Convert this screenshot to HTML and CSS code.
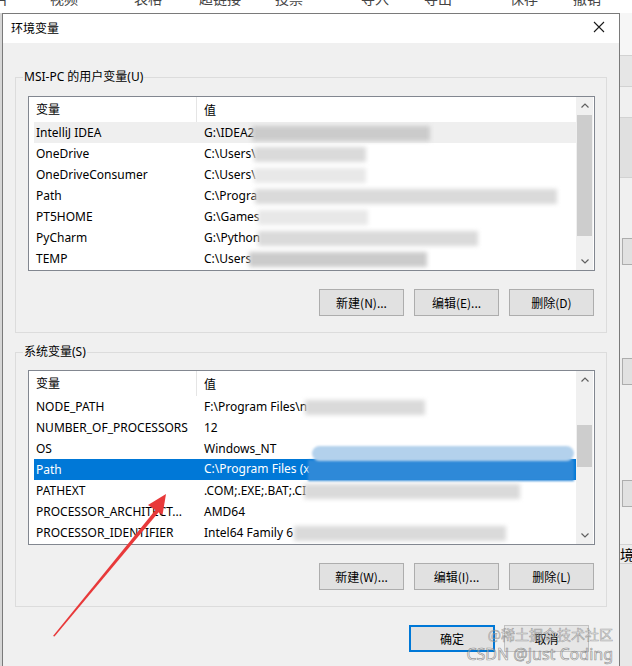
FILE: index.html
```html
<!DOCTYPE html>
<html lang="zh-CN">
<head>
  <meta charset="UTF-8" />
  <title>环境变量</title>
  <link rel="stylesheet" href="styles.css">
</head>
<body>

  <!-- 后面那个编辑器的工具栏，只露出一点 -->
  <div class="appbar">
    <span>片</span><span>视频</span><span>表格</span><span>超链接</span><span>投票</span>
    <span>导入</span><span>导出</span><span>保存</span><span>撤销</span><span>三</span>
  </div>

  <div class="stage">
    <div class="edge-left"></div>

    <div class="dialog">
      <div class="titlebar">
        <span class="title">环境变量</span>
        <svg class="close" width="12" height="12" viewBox="0 0 12 12">
          <path d="M1 1 L11 11 M11 1 L1 11" stroke="#1a1a1a" stroke-width="1.1" fill="none" />
        </svg>
      </div>

      <div class="dialog-body">

        <fieldset class="group">
          <legend>MSI-PC 的用户变量(U)</legend>
          <div class="listview">
            <div class="list-main">
              <div class="list-head">
                <div class="col-name">变量</div>
                <div class="col-value">值</div>
              </div>
              <div class="row hover">
                <div class="col-name">IntelliJ IDEA</div>
                <div class="col-value">G:\IDEA2<span class="smudge dark" style="width:178px"></span></div>
              </div>
              <div class="row">
                <div class="col-name">OneDrive</div>
                <div class="col-value">C:\Users\<span class="smudge" style="width:112px"></span></div>
              </div>
              <div class="row">
                <div class="col-name">OneDriveConsumer</div>
                <div class="col-value">C:\Users\<span class="smudge light" style="width:112px"></span></div>
              </div>
              <div class="row">
                <div class="col-name">Path</div>
                <div class="col-value">C:\Progra<span class="smudge" style="width:302px"></span></div>
              </div>
              <div class="row">
                <div class="col-name">PT5HOME</div>
                <div class="col-value">G:\Games<span class="smudge light" style="width:110px"></span></div>
              </div>
              <div class="row">
                <div class="col-name">PyCharm</div>
                <div class="col-value">G:\Python<span class="smudge" style="width:220px"></span></div>
              </div>
              <div class="row">
                <div class="col-name">TEMP</div>
                <div class="col-value">C:\Users<span class="smudge dark" style="width:178px"></span></div>
              </div>
            </div>
            <div class="scrollbar">
              <div class="arrow up"><svg width="8" height="5" viewBox="0 0 8 5"><path d="M0.5 4.5 L4 1 L7.5 4.5" stroke="#606060" fill="none" stroke-width="1.2"/></svg></div>
              <div class="track"><div class="thumb user-thumb"></div></div>
              <div class="arrow down"><svg width="8" height="5" viewBox="0 0 8 5"><path d="M0.5 0.5 L4 4 L7.5 0.5" stroke="#606060" fill="none" stroke-width="1.2"/></svg></div>
            </div>
          </div>
          <div class="btn-row">
            <button>新建(N)...</button>
            <button>编辑(E)...</button>
            <button>删除(D)</button>
          </div>
        </fieldset>

        <fieldset class="group sys">
          <legend>系统变量(S)</legend>
          <div class="listview">
            <div class="list-main">
              <div class="list-head">
                <div class="col-name">变量</div>
                <div class="col-value">值</div>
              </div>
              <div class="row">
                <div class="col-name">NODE_PATH</div>
                <div class="col-value">F:\Program Files\n<span class="smudge" style="width:120px"></span></div>
              </div>
              <div class="row">
                <div class="col-name">NUMBER_OF_PROCESSORS</div>
                <div class="col-value">12</div>
              </div>
              <div class="row">
                <div class="col-name">OS</div>
                <div class="col-value">Windows_NT</div>
              </div>
              <div class="row selected">
                <div class="col-name">Path</div>
                <div class="col-value">C:\Program Files (x<span class="smudge blue" style="width:266px"></span></div>
              </div>
              <div class="row">
                <div class="col-name">PATHEXT</div>
                <div class="col-value">.COM;.EXE;.BAT;.CI<span class="smudge" style="width:216px"></span></div>
              </div>
              <div class="row">
                <div class="col-name">PROCESSOR_ARCHITECT...</div>
                <div class="col-value">AMD64</div>
              </div>
              <div class="row">
                <div class="col-name">PROCESSOR_IDENTIFIER</div>
                <div class="col-value">Intel64 Family 6 <span class="smudge" style="width:212px"></span></div>
              </div>
            </div>
            <div class="scrollbar">
              <div class="arrow up"><svg width="8" height="5" viewBox="0 0 8 5"><path d="M0.5 4.5 L4 1 L7.5 4.5" stroke="#606060" fill="none" stroke-width="1.2"/></svg></div>
              <div class="track"><div class="thumb sys-thumb"></div></div>
              <div class="arrow down"><svg width="8" height="5" viewBox="0 0 8 5"><path d="M0.5 0.5 L4 4 L7.5 0.5" stroke="#606060" fill="none" stroke-width="1.2"/></svg></div>
            </div>
          </div>
          <div class="btn-row">
            <button>新建(W)...</button>
            <button>编辑(I)...</button>
            <button>删除(L)</button>
          </div>
        </fieldset>

        <div class="dialog-actions">
          <button class="default">确定</button>
          <button class="cancel">取消</button>
        </div>
      </div>
    </div>

    <div class="edge-right">
      <div class="er er-a"></div>
      <div class="er er-b"></div>
      <div class="er er-c"></div>
      <div class="er er-d"></div>
      <div class="er er-e"></div>
      <div class="er er-box"></div>
      <div class="er er-f"></div>
      <div class="er er-box"></div>
      <div class="er er-g"></div>
      <div class="er er-box"></div>
      <div class="er er-h"></div>
      <div class="er er-text">境</div>
      <div class="er-rest"></div>
    </div>
  </div>

  <!-- 截图上画的红箭头 -->
  <svg class="mark-arrow" width="632" height="666" viewBox="0 0 632 666">
    <path d="M53 636 L157.5 507.5 L160.5 510 L54.5 636.5 Z" fill="#e8393a" />
    <path d="M166 494 L148 505 L162.5 515 Z" fill="#e8393a" />
  </svg>

  <div class="watermark">
    <div class="wm-juejin">@稀土掘金技术社区</div>
    <div class="wm-csdn">CSDN @Just Coding</div>
  </div>

</body>
</html>
```

FILE: styles.css
```css
* {
  box-sizing: border-box;
}
body {
  margin: 0;
  width: 632px;
  height: 666px;
  overflow: hidden;
  position: relative;
  background: #f0f0f0;
  font-family: "Noto Sans", "Noto Sans CJK SC", sans-serif;
  font-size: 12px;
  color: #000;
}
.appbar {
  height: 13px;
  background: #fff;
  overflow: hidden;
  display: flex;
  font-family: "Noto Sans CJK SC", sans-serif;
  font-size: 14px;
  line-height: 14px;
  color: #444;
}
.appbar span {
  margin-top: -9px;
  flex: none;
}
.appbar span:nth-child(1) { margin-left: -5px; margin-right: 41px; }
.appbar span:nth-child(2) { margin-right: 56px; }
.appbar span:nth-child(3) { margin-right: 37px; }
.appbar span:nth-child(4) { margin-right: 34px; }
.appbar span:nth-child(5) { margin-right: 58px; }
.appbar span:nth-child(6) { margin-right: 35px; }
.appbar span:nth-child(7) { margin-right: 58px; }
.appbar span:nth-child(8) { margin-right: 35px; }
.appbar span:nth-child(9) { margin-right: 33px; }

.stage {
  display: flex;
  height: 653px;
}
.edge-left {
  width: 2px;
  background: #d6d6d6;
}
.dialog {
  width: 618px;
  border: 1px solid #7a7a7a;
  border-bottom: none;
  background: #f0f0f0;
}
.titlebar {
  height: 29px;
  background: #fff;
  display: flex;
  align-items: center;
  justify-content: space-between;
  padding: 0 14px 3px 8px;
}
.title {
  font-family: "Noto Sans CJK SC", sans-serif;
  font-size: 12px;
}
.dialog-body {
  padding: 26px 12px 0 12px;
}

.group {
  margin: 0;
  border: 1px solid #dcdcdc;
  padding: 11px 11px 16px 12px;
  min-width: 0;
}
.group.sys {
  margin-top: 11px;
  padding-top: 10px;
}
.group legend {
  margin-left: -5px;
  padding: 0 1px;
  line-height: 16px;
}

.listview {
  display: flex;
  height: 175px;
  border: 1px solid #828790;
  background: #fff;
}
.list-main {
  flex: 1;
  padding-left: 5px;
  overflow: hidden;
}
.list-head {
  display: flex;
  height: 25px;
  align-items: center;
}
.list-head .col-name {
  border-right: 1px solid #e5e5e5;
  height: 25px;
  line-height: 25px;
}
.col-name {
  width: 163px;
  flex: none;
  padding-left: 2px;
  white-space: nowrap;
}
.col-value {
  flex: 1;
  padding-left: 7px;
  white-space: nowrap;
}
.row {
  display: flex;
  height: 21px;
  line-height: 21px;
  align-items: center;
}
.row.hover {
  background: #efefef;
}
.row.selected {
  background: #0078d7;
  color: #fff;
}

/* 截图里打了码的地方 */
.smudge {
  display: inline-block;
  height: 15px;
  vertical-align: middle;
  margin-left: -2px;
  background: #dadada;
  filter: blur(2px);
}
.smudge.dark {
  background: #cbcbcb;
}
.smudge.light {
  background: #e8e8e8;
}
.smudge.blue {
  position: relative;
  height: 21px;
  background: #2e89d8;
  filter: blur(1px);
}
.smudge.blue::before {
  content: "";
  position: absolute;
  left: 4px;
  right: 0;
  top: -14px;
  height: 15px;
  border-radius: 8px;
  background: #b3d1ec;
}

.scrollbar {
  width: 17px;
  flex: none;
  display: flex;
  flex-direction: column;
  background: #f0f0f0;
  margin-right: 1px;
}
.arrow {
  height: 17px;
  display: flex;
  align-items: center;
  justify-content: center;
}
.track {
  flex: 1;
}
.thumb {
  background: #cdcdcd;
  margin: 0 1px;
}
.user-thumb {
  margin-top: 1px;
  height: 121px;
}
.sys-thumb {
  margin-top: 37px;
  height: 42px;
}

button {
  font-family: "Noto Sans CJK SC", sans-serif;
  font-size: 12px;
  color: #000;
  background: #e1e1e1;
  border: 1px solid #adadad;
  padding: 0;
  width: 85px;
  height: 27px;
}
.btn-row {
  display: flex;
  justify-content: flex-end;
  gap: 10px;
  margin-top: 18px;
  padding-right: 1px;
}
.dialog-actions {
  display: flex;
  justify-content: flex-end;
  gap: 9px;
  margin-top: 18px;
  padding-right: 18px;
}
button.default {
  width: 86px;
  border: 2px solid #0078d7;
}
button.cancel {
  background: #e6e6e6;
  border-color: #c2c2c2;
}

.edge-right {
  width: 12px;
  display: flex;
  flex-direction: column;
  background: #ececec;
  overflow: hidden;
}
.er {
  flex: none;
  border-bottom: 1px solid #d2d2d2;
}
.er-a { height: 43px; background: #f6f6f6; }
.er-b { height: 31px; background: #e6e6e6; }
.er-c { height: 31px; background: #f0f0f0; }
.er-d { height: 60px; background: #e0e0e0; }
.er-e { height: 60px; background: #f0f0f0; border-bottom: none; }
.er-box { height: 27px; margin-left: 2px; background: #e1e1e1; border: 1px solid #adadad; border-right: none; }
.er-f { height: 93px; background: #f0f0f0; border-bottom: none; }
.er-g { height: 95px; background: #f0f0f0; border-bottom: none; }
.er-h { height: 38px; background: #f0f0f0; }
.er-text { height: 18px; font-family: "Noto Sans CJK SC", sans-serif; font-size: 14px; line-height: 18px; border-bottom: none; }
.er-rest { flex: 1; background: #e8e8e8; border-top: 1px solid #cfcfcf; }

.mark-arrow {
  position: absolute;
  left: 0;
  top: 0;
  pointer-events: none;
}

.watermark {
  position: absolute;
  right: 19px;
  bottom: 2px;
  text-align: right;
  pointer-events: none;
}
.wm-juejin {
  font-family: "Noto Sans CJK SC", sans-serif;
  font-size: 14px;
  line-height: 18px;
  color: rgba(255, 255, 255, 0.35);
  -webkit-text-stroke: 0.6px rgba(110, 110, 110, 0.6);
  margin-bottom: 1px;
}
.wm-csdn {
  font-family: "Noto Sans", sans-serif;
  font-size: 16px;
  line-height: 20px;
  color: rgba(255, 255, 255, 0.4);
  -webkit-text-stroke: 0.7px rgba(100, 100, 100, 0.65);
}
```
